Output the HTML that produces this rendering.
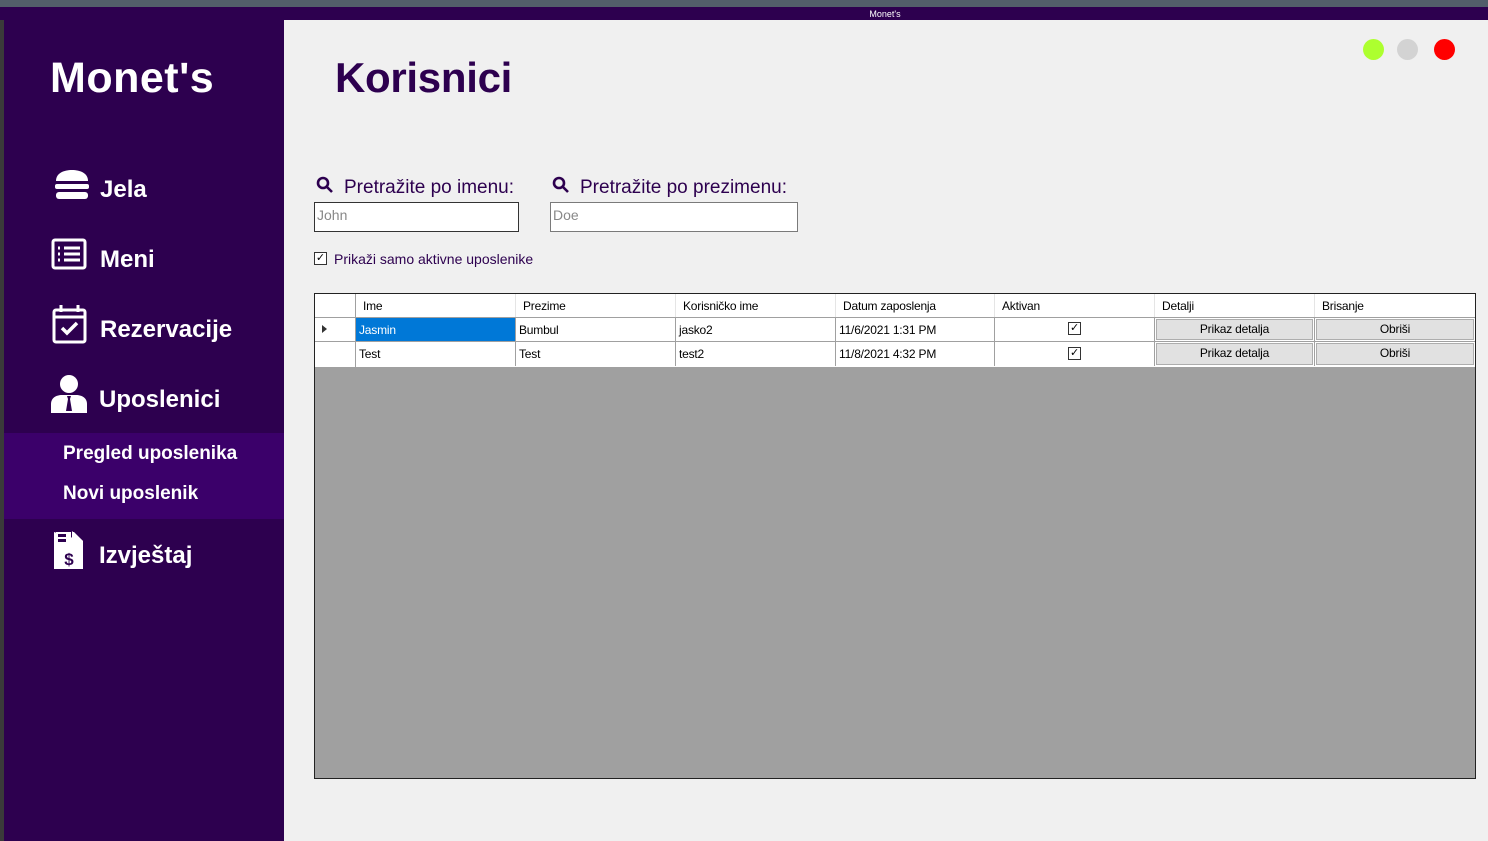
<!DOCTYPE html>
<html><head><meta charset="utf-8"><style>
*{margin:0;padding:0;box-sizing:border-box}
body{width:1488px;height:841px;position:relative;overflow:hidden;background:#3a3a3a;font-family:"Liberation Sans",sans-serif}
.a{position:absolute}
.side{left:4px;top:20px;width:280px;height:821px;background:#2d004f}
.main{left:284px;top:20px;width:1204px;height:821px;background:#f0f0f0}
.nav{color:#fff;font-weight:bold;font-size:24px}
.cell{position:absolute;font-size:12px;color:#000;height:100%;border-right:1px solid #a0a0a0;padding-left:3px;line-height:24px;white-space:nowrap;letter-spacing:-0.2px}
.btn{position:absolute;top:1px;bottom:1px;left:1px;right:1px;background:#e1e1e1;border:1px solid #adadad;text-align:center;line-height:19px;font-size:12px}
.chk{position:absolute;width:13px;height:13px;border:1px solid #333;background:#fff;font-size:11px;line-height:11px;text-align:center}
</style></head><body>
<div class="a" style="left:0;top:0;width:1488px;height:7px;background:#525e6a"></div>
<div class="a" style="left:0;top:7px;width:1488px;height:13px;background:#2d004f;color:#fff;font-size:9px;text-align:center;line-height:14px;padding-left:282px">Monet's</div>
<div class="a side"></div>
<div class="a main"></div>
<div class="a" style="left:50px;top:54px;color:#fff;font-size:43px;font-weight:bold;letter-spacing:0.5px">Monet's</div>
<svg class="a" style="left:54px;top:170px" width="36" height="30" viewBox="0 0 36 30" fill="#fff"><path d="M2 11C2 3 10 0 18 0S34 3 34 11Z"/><rect x="1" y="14" width="34" height="5" rx="2"/><rect x="2" y="22" width="32" height="7" rx="3"/></svg>
<div class="a nav" style="left:100px;top:176px">Jela</div>
<svg class="a" style="left:51px;top:238px" width="36" height="32" viewBox="0 0 36 32" fill="none" stroke="#fff" stroke-width="3"><rect x="2" y="2" width="32" height="28" rx="2"/><path d="M13 10H29M13 16H29M13 22H29M7 10h2M7 16h2M7 22h2"/></svg>
<div class="a nav" style="left:100px;top:246px">Meni</div>
<svg class="a" style="left:52px;top:304px" width="36" height="40" viewBox="0 0 36 40" fill="none" stroke="#fff" stroke-width="3"><rect x="2" y="6" width="31" height="32" rx="2"/><path d="M9 1v7M26 1v7M2 13H33" /><path d="M10 24l5 5 10-10" stroke-width="3.5"/></svg>
<div class="a nav" style="left:100px;top:316px">Rezervacije</div>
<svg class="a" style="left:51px;top:374px" width="36" height="40" viewBox="0 0 36 40" fill="#fff"><circle cx="18" cy="10" r="9"/><path d="M0 39V30C0 24 5 21 11 21H25C31 21 36 24 36 30V39Z"/><path d="M16 22h4l-1 3 2 12h-6l2-12z" fill="#2d004f"/></svg>
<div class="a nav" style="left:99px;top:386px">Uposlenici</div>
<div class="a" style="left:4px;top:433px;width:280px;height:86px;background:#3b006a"></div>
<div class="a" style="left:63px;top:443px;color:#fff;font-weight:bold;font-size:19px">Pregled uposlenika</div>
<div class="a" style="left:63px;top:483px;color:#fff;font-weight:bold;font-size:19px">Novi uposlenik</div>
<svg class="a" style="left:54px;top:530px" width="30" height="41" viewBox="0 0 30 41" fill="#fff"><path d="M0 2V39H29V11L20 2H18V13H29V11Z"/><path d="M2 2H17V12H2Z" fill="#fff"/><path d="M18 1l11 10H18Z"/><rect x="4" y="4" width="8" height="3" fill="#2d004f"/><rect x="4" y="9" width="8" height="3" fill="#2d004f"/><text x="15" y="35" font-size="17" font-weight="bold" text-anchor="middle" fill="#2d004f" font-family="Liberation Sans">$</text></svg>
<div class="a nav" style="left:99px;top:542px">Izvještaj</div>
<div class="a" style="left:335px;top:54px;color:#2d004f;font-size:42px;font-weight:bold;letter-spacing:-0.3px">Korisnici</div>
<div class="a" style="left:1363px;top:39px;width:21px;height:21px;border-radius:50%;background:#adff2f"></div>
<div class="a" style="left:1397px;top:39px;width:21px;height:21px;border-radius:50%;background:#d3d3d3"></div>
<div class="a" style="left:1434px;top:39px;width:21px;height:21px;border-radius:50%;background:#f00"></div>
<svg class="a" style="left:316px;top:176px" width="17" height="17" viewBox="0 0 17 17" fill="none" stroke="#2d004f" stroke-width="2.6"><circle cx="7" cy="7" r="5"/><path d="M11 11l5 5"/></svg>
<div class="a" style="left:344px;top:177px;color:#2d004f;font-size:19px">Pretražite po imenu:</div>
<svg class="a" style="left:552px;top:176px" width="17" height="17" viewBox="0 0 17 17" fill="none" stroke="#2d004f" stroke-width="2.6"><circle cx="7" cy="7" r="5"/><path d="M11 11l5 5"/></svg>
<div class="a" style="left:580px;top:177px;color:#2d004f;font-size:19px">Pretražite po prezimenu:</div>
<div class="a" style="left:314px;top:202px;width:205px;height:30px;background:#fff;border:1px solid #333;color:#888;font-size:14px;padding:4px 2px">John</div>
<div class="a" style="left:550px;top:202px;width:248px;height:30px;background:#fff;border:1px solid #7a7a7a;color:#888;font-size:14px;padding:4px 2px">Doe</div>
<div class="chk" style="left:314px;top:252px">✓</div>
<div class="a" style="left:334px;top:251px;color:#2d004f;font-size:14px">Prikaži samo aktivne uposlenike</div>
<div class="a" style="left:314px;top:293px;width:1162px;height:486px;background:#a0a0a0;border:1px solid #222"></div>
<div class="a" style="left:315px;top:294px;width:1160px;height:73px;background:#fff"></div>
<div class="a" style="left:315px;top:294px;width:41px;height:73px;border-right:1px solid #a0a0a0;background:#fff"></div>
<div class="a" style="left:315px;top:317px;width:1160px;height:1px;background:#a0a0a0"></div>
<div class="a" style="left:315px;top:341px;width:1160px;height:1px;background:#a0a0a0"></div>
<div class="a" style="left:356px;top:294px;width:1119px;height:23px">
<div class="cell" style="left:0;width:160px;padding-left:7px;border-color:#e5e5e5">Ime</div><div class="cell" style="left:160px;width:160px;padding-left:7px;border-color:#e5e5e5">Prezime</div><div class="cell" style="left:320px;width:160px;padding-left:7px;border-color:#e5e5e5">Korisničko ime</div><div class="cell" style="left:480px;width:159px;padding-left:7px;border-color:#e5e5e5">Datum zaposlenja</div><div class="cell" style="left:639px;width:160px;padding-left:7px;border-color:#e5e5e5">Aktivan</div><div class="cell" style="left:799px;width:160px;padding-left:7px;border-color:#e5e5e5">Detalji</div><div class="cell" style="left:959px;width:160px;padding-left:7px;border:none">Brisanje</div></div>
<div class="a" style="left:322px;top:325px;width:0;height:0;border-left:5px solid #333;border-top:4px solid transparent;border-bottom:4px solid transparent"></div>
<div class="a" style="left:356px;top:318px;width:1119px;height:23px">
<div class="cell" style="left:0;width:160px;background:#0078d7;color:#fff">Jasmin</div><div class="cell" style="left:160px;width:160px">Bumbul</div><div class="cell" style="left:320px;width:160px">jasko2</div><div class="cell" style="left:480px;width:159px">11/6/2021 1:31 PM</div><div class="cell" style="left:639px;width:160px"><div class="chk" style="left:73px;top:4px">✓</div></div><div class="cell" style="left:799px;width:160px"><div class="btn">Prikaz detalja</div></div><div class="cell" style="left:959px;width:160px;border:none"><div class="btn">Obriši</div></div></div>
<div class="a" style="left:356px;top:342px;width:1119px;height:24px">
<div class="cell" style="left:0;width:160px">Test</div><div class="cell" style="left:160px;width:160px">Test</div><div class="cell" style="left:320px;width:160px">test2</div><div class="cell" style="left:480px;width:159px">11/8/2021 4:32 PM</div><div class="cell" style="left:639px;width:160px"><div class="chk" style="left:73px;top:5px">✓</div></div><div class="cell" style="left:799px;width:160px"><div class="btn">Prikaz detalja</div></div><div class="cell" style="left:959px;width:160px;border:none"><div class="btn">Obriši</div></div></div>
</body></html>
